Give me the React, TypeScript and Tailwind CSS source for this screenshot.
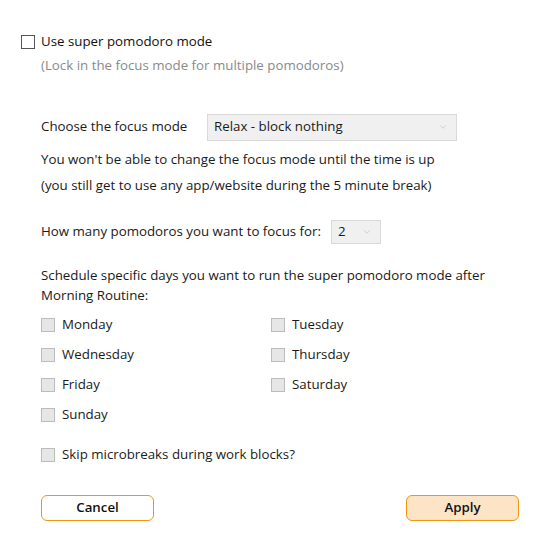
import { ChevronDown } from "lucide-react";

const days = ["Monday", "Tuesday", "Wednesday", "Thursday", "Friday", "Saturday", "Sunday"];

function DayBox({ label }: { label: string }) {
  return (
    <label className="flex items-center h-[30px] gap-[7px]">
      <span className="w-[14px] h-[14px] bg-[#e6e6e6] border border-[#bcbcbc] shrink-0" />
      <span>{label}</span>
    </label>
  );
}

function Select({ value, className }: { value: string; className: string }) {
  return (
    <div
      className={`flex items-center justify-between bg-[#f0f0f0] border border-[#d9d9d9] pl-[6px] pr-[8px] ${className}`}
    >
      <span>{value}</span>
      <ChevronDown size={10} color="#b8b8b8" strokeWidth={1.5} />
    </div>
  );
}

export default function App() {
  return (
    <div
      className="w-[549px] h-[540px] bg-white text-[#1a1a1a] text-[13.3px] relative"
      style={{ fontFamily: '"Open Sans", "Noto Sans", sans-serif' }}
    >
      <div className="pt-[32px] pl-[21px]">
        <div className="flex items-center gap-[6px] h-[20px]">
          <span className="w-[14px] h-[14px] border border-[#555] bg-white" />
          <span className="text-[#111]">Use super pomodoro mode</span>
        </div>
        <p className="pl-[20px] mt-[4px] text-[#8a8a8a]">(Lock in the focus mode for multiple pomodoros)</p>
      </div>

      <div className="pl-[41px] pr-[30px]">
        <div className="flex items-center mt-[38px]">
          <span className="w-[166px]">Choose the focus mode</span>
          <Select value="Relax - block nothing" className="w-[250px] h-[27px]" />
        </div>
        <p className="mt-[5px] leading-[26px]">
          You won't be able to change the focus mode until the time is up
        </p>
        <p className="leading-[26px]">
          (you still get to use any app/website during the 5 minute break)
        </p>

        <div className="flex items-center mt-[22px]">
          <span className="w-[290px]">How many pomodoros you want to focus for:</span>
          <Select value="2" className="w-[50px] h-[24px]" />
        </div>

        <p className="mt-[21px] leading-[20px]">
          Schedule specific days you want to run the super pomodoro mode after Morning Routine:
        </p>
        <div className="grid grid-cols-[230px_1fr] mt-[5px]">
          {days.map((d) => (
            <DayBox key={d} label={d} />
          ))}
        </div>

        <div className="mt-[10px]">
          <DayBox label="Skip microbreaks during work blocks?" />
        </div>

        <div className="flex justify-between mt-[25px]">
          <button className="w-[113px] h-[26px] rounded-[6px] border border-[#f0960f] bg-white font-semibold text-[#111]">
            Cancel
          </button>
          <button className="w-[113px] h-[26px] rounded-[6px] border border-[#f0960f] bg-[#fee4c6] font-semibold text-[#111]">
            Apply
          </button>
        </div>
      </div>
    </div>
  );
}
